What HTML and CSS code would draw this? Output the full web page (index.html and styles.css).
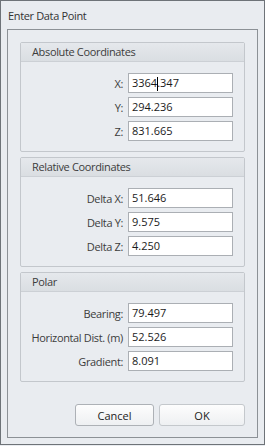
FILE: index.html
```html
<!DOCTYPE html>
<html>
<head>
  <title>Enter Data Point</title>
  <link rel="stylesheet" href="styles.css">
</head>
<body>
  <div class="dialog">
    <div class="title">Enter Data Point</div>
    <div class="frame">
      <div class="group">
        <div class="group-header">Absolute Coordinates</div>
        <div class="group-body">
          <label>X:</label>
          <div class="field">3364<span class="caret"></span>.347</div>
          <label>Y:</label>
          <div class="field">294.236</div>
          <label>Z:</label>
          <div class="field">831.665</div>
        </div>
      </div>

      <div class="group">
        <div class="group-header">Relative Coordinates</div>
        <div class="group-body">
          <label>Delta X:</label>
          <div class="field">51.646</div>
          <label>Delta Y:</label>
          <div class="field">9.575</div>
          <label>Delta Z:</label>
          <div class="field">4.250</div>
        </div>
      </div>

      <div class="group">
        <div class="group-header">Polar</div>
        <div class="group-body">
          <label>Bearing:</label>
          <div class="field">79.497</div>
          <label>Horizontal Dist. (m)</label>
          <div class="field">52.526</div>
          <label>Gradient:</label>
          <div class="field">8.091</div>
        </div>
      </div>

      <div class="buttons">
        <button class="btn btn-cancel">Cancel</button>
        <button class="btn btn-ok">OK</button>
      </div>
    </div>
  </div>
</body>
</html>
```

FILE: styles.css
```css
body {
  margin: 0;
  background: #e9ecf0;
  font-family: "Open Sans", "Noto Sans", sans-serif;
  font-size: 11px;
  letter-spacing: -0.35px;
  color: #3c3c3c;
}

.dialog {
  width: 265px;
  height: 445px;
  box-sizing: border-box;
  border: 1px solid #6e7378;
  padding: 0 6px 6px;
  display: flex;
  flex-direction: column;
  background: #e9ecf0;
}

.title {
  height: 28px;
  line-height: 30px;
  padding-left: 1px;
  color: #333;
}

.frame {
  flex: 1;
  border: 1px solid #8c9196;
  padding: 12px 12px 11px;
  display: flex;
  flex-direction: column;
  gap: 5px;
}

.group {
  height: 110px;
  box-sizing: border-box;
  border: 1px solid #c3c7cc;
  border-radius: 2px;
}

.group-header {
  height: 18px;
  line-height: 18px;
  padding-left: 11px;
  border-bottom: 1px solid #ccd0d5;
  background: linear-gradient(#e5e8ec, #dadee2);
}

.group-body {
  display: grid;
  grid-template-columns: 1fr 105px;
  grid-auto-rows: 20px;
  row-gap: 4px;
  column-gap: 5px;
  align-items: center;
  padding: 11px 11px 10px 0;
}

.group-body label {
  text-align: right;
}

.field {
  height: 20px;
  box-sizing: border-box;
  border: 1px solid #abafb4;
  background: #fff;
  padding-left: 3px;
  line-height: 18px;
  letter-spacing: 0;
  color: #1a1a1a;
}

.caret {
  display: inline-block;
  width: 1px;
  height: 14px;
  margin-right: -1px;
  background: #000;
  vertical-align: middle;
}

.buttons {
  margin-top: 17px;
  display: flex;
  justify-content: flex-end;
  gap: 5px;
}

.btn {
  height: 22px;
  border: 1px solid #adb1b6;
  border-radius: 3px;
  background: linear-gradient(#fdfdfd, #eef0f2);
  font: inherit;
  color: #222;
  padding: 0;
}

.btn-cancel {
  width: 79px;
}

.btn-ok {
  width: 86px;
  border-color: #c4c8cc;
}
```
